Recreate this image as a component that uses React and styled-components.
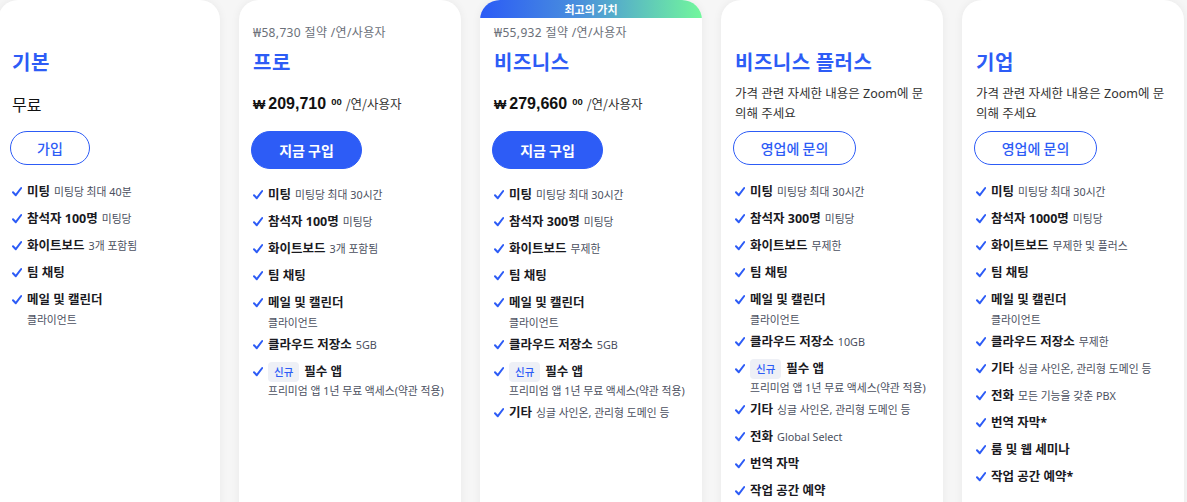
import React from "react";
import styled, { createGlobalStyle } from "styled-components";

const Global = createGlobalStyle`
  html, body { margin: 0; padding: 0; }
  body {
    background: #f6f6f6;
    overflow: hidden;
    font-family: "Noto Sans", "Noto Sans CJK KR", sans-serif;
    color: #1d1d22;
  }
`;

const BLUE = "#2d5cf6";

const Row = styled.div`
  display: flex;
  gap: 19px;
  margin-left: -2px;
  align-items: flex-start;
`;

const Card = styled.div`
  flex: 0 0 222px;
  height: 560px;
  box-sizing: border-box;
  background: #fff;
  border-radius: 20px;
  box-shadow: 0 0 10px rgba(0, 0, 0, 0.06);
  padding: ${(p) => (p.$featured ? "0 14px" : "25px 14px 0")};
  display: flex;
  flex-direction: column;
  overflow: hidden;
`;

const Ribbon = styled.div`
  margin: 0 -14px 7px;
  height: 18px;
  background: linear-gradient(90deg, #2b5bf6 0%, #4a90dc 45%, #72f79c 100%);
  color: #fff;
  font-family: "Noto Sans CJK KR", sans-serif;
  font-weight: 700;
  font-size: 11px;
  line-height: 18px;
  text-align: center;
`;

const Savings = styled.div`
  height: 16px;
  font-size: 12px;
  line-height: 16px;
  letter-spacing: 0.35px;
  color: #6b7079;
  font-family: "Noto Sans", "Noto Sans CJK KR", sans-serif;
`;

const Title = styled.h2`
  margin: 7px 0 0;
  font-family: "Noto Sans CJK KR", sans-serif;
  font-size: 20px;
  line-height: 28px;
  font-weight: 700;
  color: ${BLUE};
  letter-spacing: 0.5px;
`;

const PriceArea = styled.div`
  height: 55px;
  display: flex;
  align-items: center;
`;

const Free = styled.div`
  font-family: "Noto Sans CJK KR", sans-serif;
  font-size: 16px;
  line-height: 24px;
  color: #111;
`;

const Price = styled.div`
  display: flex;
  align-items: baseline;
  color: #111;
`;

const Currency = styled.span`
  font-family: "Liberation Sans", sans-serif;
  font-weight: 700;
  font-size: 13px;
  margin-right: 3px;
`;

const Amount = styled.span`
  font-family: "Liberation Sans", sans-serif;
  font-weight: 700;
  font-size: 16px;
`;

const Cents = styled.span`
  font-family: "Liberation Sans", sans-serif;
  font-weight: 700;
  font-size: 9.5px;
  margin-left: 5px;
  position: relative;
  top: -4px;
`;

const Unit = styled.span`
  font-family: "Noto Sans CJK KR", sans-serif;
  font-size: 12.5px;
  margin-left: 4px;
  color: #333;
`;

const Desc = styled.p`
  margin: 0;
  font-family: "Noto Sans", "Noto Sans CJK KR", sans-serif;
  font-size: 12.5px;
  line-height: 20px;
  color: #333;
`;

const Button = styled.button`
  align-self: flex-start;
  box-sizing: border-box;
  width: ${(p) => p.$width}px;
  height: ${(p) => (p.$filled ? 38 : 34)}px;
  margin-left: -2px;
  border-radius: 20px;
  border: 1px solid ${BLUE};
  background: ${(p) => (p.$filled ? BLUE : "#fff")};
  color: ${(p) => (p.$filled ? "#fff" : BLUE)};
  font-family: "Noto Sans CJK KR", sans-serif;
  font-size: 14px;
  font-weight: ${(p) => (p.$filled ? 700 : 500)};
  padding: 0;
  cursor: pointer;
`;

const Features = styled.ul`
  list-style: none;
  margin: ${(p) => (p.$afterFilled ? 16 : 17)}px 0 0;
  padding: 0;
  display: flex;
  flex-direction: column;
  gap: 7px;
`;

const Item = styled.li`
  display: grid;
  grid-template-columns: 10px 1fr;
  column-gap: 5px;
  align-items: start;
`;

const Check = styled.svg`
  width: 10px;
  height: 20px;
  display: block;
`;

const Main = styled.div`
  display: flex;
  align-items: center;
  height: 20px;
  line-height: 20px;
  white-space: nowrap;
`;

const Strong = styled.span`
  font-family: "Noto Sans", "Noto Sans CJK KR", sans-serif;
  font-weight: 700;
  font-size: 12.5px;
  color: #1a1a1f;
`;

const Note = styled.span`
  font-family: "Noto Sans", "Noto Sans CJK KR", sans-serif;
  font-size: 10.8px;
  color: #4b5060;
  margin-left: 4px;
`;

const Badge = styled.span`
  display: inline-block;
  height: 20px;
  line-height: 20px;
  padding: 0 6px;
  border-radius: 4px;
  background: #eef0f6;
  color: ${BLUE};
  font-family: "Noto Sans CJK KR", sans-serif;
  font-size: 10.5px;
  font-weight: 500;
  margin-right: 5px;
`;

const Sub = styled.div`
  grid-column: 2;
  font-family: "Noto Sans", "Noto Sans CJK KR", sans-serif;
  font-size: 10.8px;
  line-height: 15px;
  padding-top: ${(p) => (p.$tight ? 1 : 2)}px;
  margin-bottom: ${(p) => (p.$tight ? -2 : -2)}px;
  color: #4b5060;
  white-space: nowrap;
`;

const CheckIcon = () => (
  <Check viewBox="0 0 10 20" aria-hidden="true">
    <path
      d="M1 10.2 L3.8 13.2 L9.2 6"
      fill="none"
      stroke={BLUE}
      strokeWidth="2"
      strokeLinecap="round"
      strokeLinejoin="round"
    />
  </Check>
);

const common = [{ t: "미팅", s: "미팅당 최대 30시간" }];

const plans = [
  {
    name: "기본",
    free: "무료",
    button: { label: "가입", width: 80 },
    features: [
      { t: "미팅", s: "미팅당 최대 40분" },
      { t: "참석자 100명", s: "미팅당" },
      { t: "화이트보드", s: "3개 포함됨" },
      { t: "팀 채팅" },
      { t: "메일 및 캘린더", sub: "클라이언트" },
    ],
  },
  {
    name: "프로",
    savings: "₩58,730 절약 /연/사용자",
    price: "209,710",
    button: { label: "지금 구입", width: 111, filled: true },
    features: [
      ...common,
      { t: "참석자 100명", s: "미팅당" },
      { t: "화이트보드", s: "3개 포함됨" },
      { t: "팀 채팅" },
      { t: "메일 및 캘린더", sub: "클라이언트" },
      { t: "클라우드 저장소", s: "5GB" },
      { badge: "신규", t: "필수 앱", sub: "프리미엄 앱 1년 무료 액세스(약관 적용)" },
    ],
  },
  {
    name: "비즈니스",
    ribbon: "최고의 가치",
    savings: "₩55,932 절약 /연/사용자",
    price: "279,660",
    button: { label: "지금 구입", width: 111, filled: true },
    features: [
      ...common,
      { t: "참석자 300명", s: "미팅당" },
      { t: "화이트보드", s: "무제한" },
      { t: "팀 채팅" },
      { t: "메일 및 캘린더", sub: "클라이언트" },
      { t: "클라우드 저장소", s: "5GB" },
      { badge: "신규", t: "필수 앱", sub: "프리미엄 앱 1년 무료 액세스(약관 적용)" },
      { t: "기타", s: "싱글 사인온, 관리형 도메인 등" },
    ],
  },
  {
    name: "비즈니스 플러스",
    desc: "가격 관련 자세한 내용은 Zoom에 문의해 주세요",
    button: { label: "영업에 문의", width: 123 },
    features: [
      ...common,
      { t: "참석자 300명", s: "미팅당" },
      { t: "화이트보드", s: "무제한" },
      { t: "팀 채팅" },
      { t: "메일 및 캘린더", sub: "클라이언트" },
      { t: "클라우드 저장소", s: "10GB" },
      { badge: "신규", t: "필수 앱", sub: "프리미엄 앱 1년 무료 액세스(약관 적용)" },
      { t: "기타", s: "싱글 사인온, 관리형 도메인 등" },
      { t: "전화", s: "Global Select" },
      { t: "번역 자막" },
      { t: "작업 공간 예약" },
    ],
  },
  {
    name: "기업",
    desc: "가격 관련 자세한 내용은 Zoom에 문의해 주세요",
    button: { label: "영업에 문의", width: 123 },
    features: [
      ...common,
      { t: "참석자 1000명", s: "미팅당" },
      { t: "화이트보드", s: "무제한 및 플러스" },
      { t: "팀 채팅" },
      { t: "메일 및 캘린더", sub: "클라이언트" },
      { t: "클라우드 저장소", s: "무제한" },
      { t: "기타", s: "싱글 사인온, 관리형 도메인 등" },
      { t: "전화", s: "모든 기능을 갖춘 PBX" },
      { t: "번역 자막*" },
      { t: "룸 및 웹 세미나" },
      { t: "작업 공간 예약*" },
    ],
  },
];

function PlanCard({ plan }) {
  return (
    <Card $featured={!!plan.ribbon}>
      {plan.ribbon && <Ribbon>{plan.ribbon}</Ribbon>}
      <Savings>{plan.savings || ""}</Savings>
      <Title>{plan.name}</Title>
      <PriceArea>
        {plan.free && <Free>{plan.free}</Free>}
        {plan.price && (
          <Price>
            <Currency>₩</Currency>
            <Amount>{plan.price}</Amount>
            <Cents>00</Cents>
            <Unit>/연/사용자</Unit>
          </Price>
        )}
        {plan.desc && <Desc>{plan.desc}</Desc>}
      </PriceArea>
      <Button $width={plan.button.width} $filled={plan.button.filled}>
        {plan.button.label}
      </Button>
      <Features $afterFilled={!!plan.button.filled}>
        {plan.features.map((f, i) => (
          <Item key={i}>
            <CheckIcon />
            <Main>
              {f.badge && <Badge>{f.badge}</Badge>}
              <Strong>{f.t}</Strong>
              {f.s && <Note>{f.s}</Note>}
            </Main>
            {f.sub && <Sub $tight={!!f.badge}>{f.sub}</Sub>}
          </Item>
        ))}
      </Features>
    </Card>
  );
}

export default function App() {
  return (
    <>
      <Global />
      <Row>
        {plans.map((p) => (
          <PlanCard key={p.name} plan={p} />
        ))}
      </Row>
    </>
  );
}
